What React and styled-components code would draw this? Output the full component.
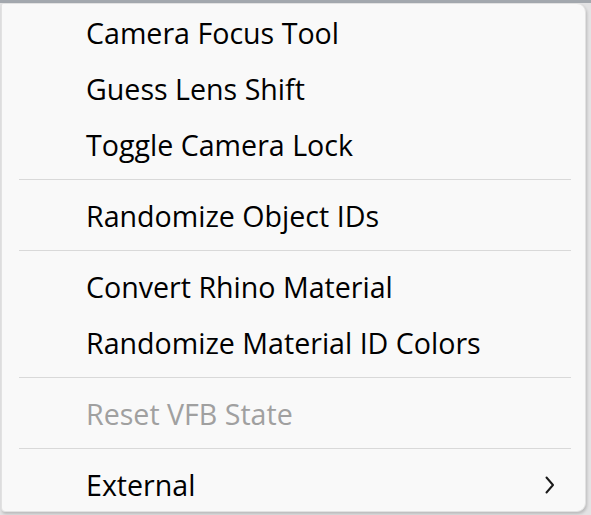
import React from "react";
import styled, { createGlobalStyle } from "styled-components";

const GlobalStyle = createGlobalStyle`
  html, body {
    margin: 0;
    padding: 0;
    background: #d9dadc;
  }
  body {
    font-family: "Open Sans", "Noto Sans", sans-serif;
  }
`;

const items = [
  { label: "Camera Focus Tool" },
  { label: "Guess Lens Shift" },
  { label: "Toggle Camera Lock" },
  { sep: true },
  { label: "Randomize Object IDs" },
  { sep: true },
  { label: "Convert Rhino Material" },
  { label: "Randomize Material ID Colors" },
  { sep: true },
  { label: "Reset VFB State", disabled: true },
  { sep: true },
  { label: "External", submenu: true },
];

function Chevron() {
  return (
    <svg width="10" height="18" viewBox="0 0 10 18">
      <path
        d="M1.5 1.5 L8 9 L1.5 16.5"
        fill="none"
        stroke="#1a1a1a"
        strokeWidth="2"
        strokeLinecap="round"
        strokeLinejoin="round"
      />
    </svg>
  );
}

export default function App() {
  return (
    <>
      <GlobalStyle />
      <Page>
        <Menu>
          {items.map((item, i) =>
            item.sep ? (
              <Separator key={i} />
            ) : (
              <Item key={i} $disabled={item.disabled}>
                <Label>{item.label}</Label>
                {item.submenu && <Chevron />}
              </Item>
            )
          )}
        </Menu>
      </Page>
    </>
  );
}

const Page = styled.div`
  width: 591px;
  height: 515px;
  padding: 3px 0 0 1px;
  box-sizing: border-box;
  background: linear-gradient(#a3a8ae 0, #a3a8ae 3px, #e3e3e4 3px);
`;

const Menu = styled.div`
  width: 585px;
  height: 509px;
  box-sizing: border-box;
  background: #f9f9f9;
  border: 1px solid #e2e2e2;
  border-radius: 2px 9px 9px 4px;
  box-shadow: 1px 2px 3px rgba(0, 0, 0, 0.18);
  display: flex;
  flex-direction: column;
  overflow: hidden;
`;

const Item = styled.div`
  height: 56px;
  flex-shrink: 0;
  display: flex;
  align-items: center;
  padding: 1px 30px 0 84px;
  box-sizing: border-box;
  font-size: 28.6px;
  color: ${(p) => (p.$disabled ? "#a0a0a0" : "#000")};
`;

const Label = styled.span`
  flex: 1;
  white-space: nowrap;
`;

const Separator = styled.div`
  height: 1px;
  flex-shrink: 0;
  background: #d9d9d9;
  margin: 7px 14px 7px 17px;
`;
